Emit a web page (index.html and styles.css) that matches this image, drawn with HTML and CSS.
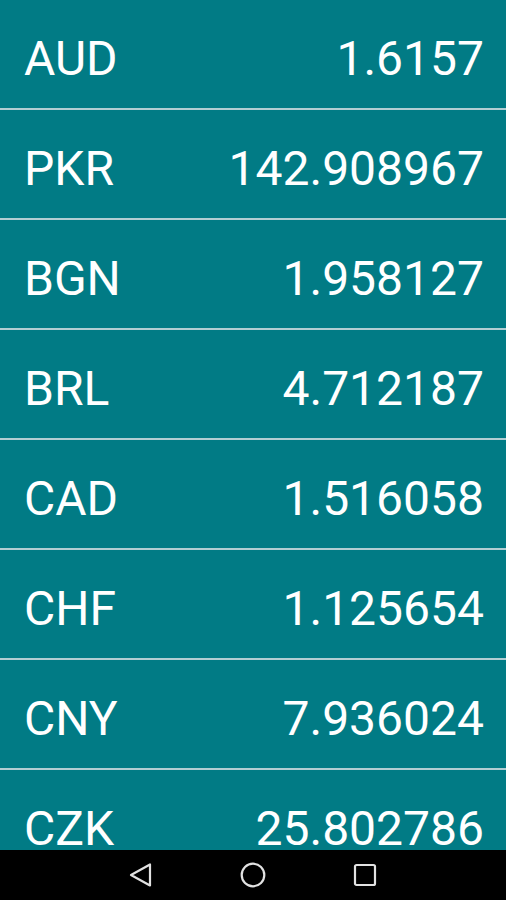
FILE: index.html
```html
<!DOCTYPE html>
<html lang="en">
<head>
    <meta charset="UTF-8">
    <meta name="viewport" content="width=device-width, initial-scale=1.0">
    <title>Currency rates</title>
    <link rel="stylesheet" href="styles.css">
</head>
<body>

    <!-- Rates list -->
    <div class="rates">
        <div class="rate-row"><span class="code">AUD</span><span class="value">1.6157</span></div>
        <div class="rate-row"><span class="code">PKR</span><span class="value">142.908967</span></div>
        <div class="rate-row"><span class="code">BGN</span><span class="value">1.958127</span></div>
        <div class="rate-row"><span class="code">BRL</span><span class="value">4.712187</span></div>
        <div class="rate-row"><span class="code">CAD</span><span class="value">1.516058</span></div>
        <div class="rate-row"><span class="code">CHF</span><span class="value">1.125654</span></div>
        <div class="rate-row"><span class="code">CNY</span><span class="value">7.936024</span></div>
        <div class="rate-row"><span class="code">CZK</span><span class="value">25.802786</span></div>
    </div>

    <!-- Navigation bar -->
    <div class="nav-bar">
        <svg class="nav-icon" width="24" height="26" viewBox="0 0 24 26">
            <path d="M2 13 L21 2.5 L21 23.5 Z" fill="none" stroke="#e2e2e2" stroke-width="2.2" stroke-linejoin="round"/>
        </svg>
        <svg class="nav-icon" width="28" height="28" viewBox="0 0 28 28">
            <circle cx="14" cy="14" r="11.3" fill="none" stroke="#e2e2e2" stroke-width="2.2"/>
        </svg>
        <svg class="nav-icon" width="24" height="24" viewBox="0 0 24 24">
            <rect x="2" y="2" width="20" height="20" rx="1.5" fill="none" stroke="#e2e2e2" stroke-width="2.2"/>
        </svg>
    </div>

</body>
</html>
```

FILE: styles.css
```css
body {
    margin: 0;
    padding: 0;
    font-family: Roboto, "Liberation Sans", sans-serif;
    background-color: #017b85;
}
.rates {
    height: 850px;
    overflow: hidden;
    background-color: #017b85;
}
.rate-row {
    display: flex;
    justify-content: space-between;
    align-items: center;
    height: 56px;
    padding: 31px 22px 21px 24px;
    border-bottom: 2px solid #b2ced3;
    color: white;
    font-size: 48px;
    line-height: 56px;
}
.nav-bar {
    height: 50px;
    background-color: black;
    display: flex;
    justify-content: center;
    align-items: center;
    gap: 86px;
}
.nav-icon {
    display: block;
}
```
